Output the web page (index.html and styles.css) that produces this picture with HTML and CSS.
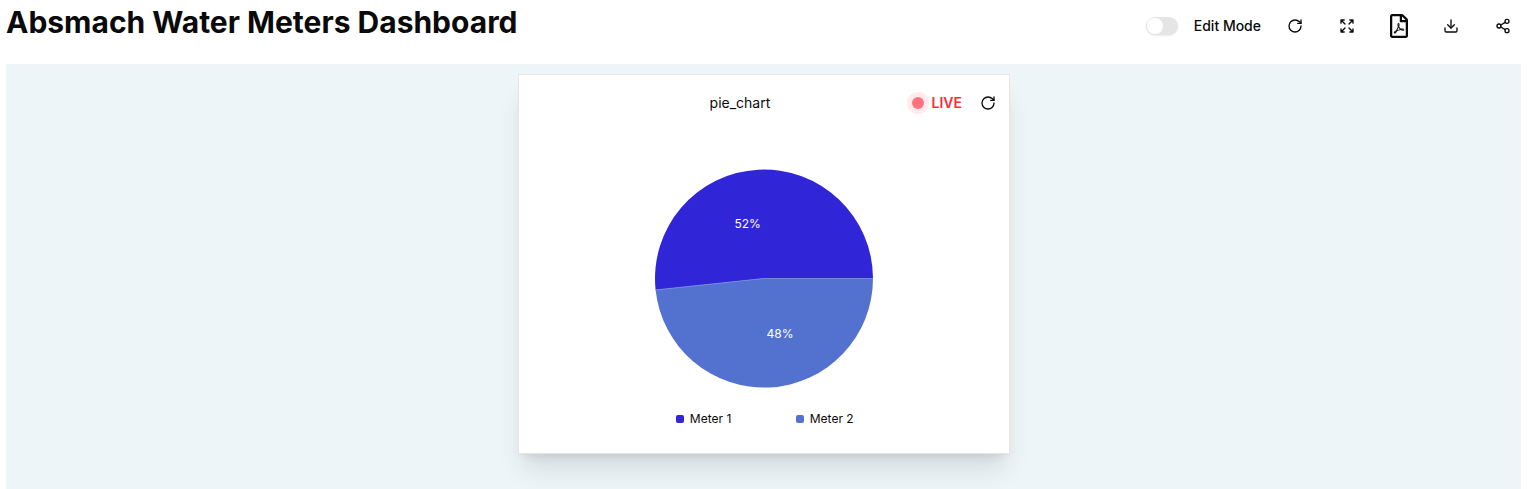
FILE: index.html
```html
<!DOCTYPE html>
<html lang="en">
<head>
<meta charset="utf-8">
<title>Absmach Water Meters Dashboard</title>
<link rel="stylesheet" href="styles.css">
</head>
<body>
<header class="header">
  <h1 class="title">Absmach Water Meters Dashboard</h1>
  <div class="toolbar">
    <button class="switch" role="switch" aria-checked="false" aria-label="Edit Mode"><span class="thumb"></span></button>
    <span class="switch-label">Edit Mode</span>
    <div class="actions">
      <button class="action" aria-label="Refresh"><svg class="icon" viewBox="0 0 24 24"><path d="M21 12a9 9 0 1 1-9-9c2.520 0 4.930 1 6.740 2.740L21 8"/><path d="M21 3v5h-5"/></svg></button>
      <button class="action" aria-label="Full screen"><svg class="icon" viewBox="0 0 24 24"><path d="m21 21-6-6m6 6v-4.800m0 4.800h-4.800"/><path d="M3 16.200V21m0 0h4.800M3 21l6-6"/><path d="M21 7.800V3m0 0h-4.800M21 3l-6 6"/><path d="M3 7.800V3m0 0h4.800M3 3l6 6"/></svg></button>
      <button class="action" aria-label="PDF"><svg class="pdf" viewBox="0 0 384 512"><path d="M369.900 97.900L286 14C277 5 264.800-.1 252.100-.1H48C21.500 0 0 21.500 0 48v416c0 26.500 21.500 48 48 48h288c26.500 0 48-21.500 48-48V131.900c0-12.700-5.100-25-14.100-34zM332.100 128H256V51.900l76.100 76.100zM48 464V48h160v104c0 13.300 10.700 24 24 24h104v288H48zm250.200-143.700c-12.200-12-47-8.700-64.400-6.500-17.200-10.500-28.700-25-36.800-46.300 3.900-16.100 10.100-40.600 5.400-56-4.200-26.200-37.800-23.600-42.600-5.900-4.400 16.100-.4 38.500 7 67.100-10 23.900-24.900 56-35.400 74.400-20 10.300-47 26.200-51 46.200-3.300 15.800 26 55.200 76.100-31.200 22.400-7.400 46.800-16.500 68.400-20.100 18.900 10.200 41 17 55.800 17 25.500 0 28-28.200 17.500-38.700zm-198.100 77.800c5.100-13.700 24.500-29.500 30.400-35-19 30.300-30.400 35.700-30.400 35zm81.600-190.600c7.400 0 6.700 32.100 1.800 40.800-4.400-13.900-4.300-40.800-1.800-40.800zm-24.400 136.600c9.700-16.900 18-37 24.700-54.700 8.300 15.100 18.900 27.200 30.100 35.500-20.800 4.300-38.900 13.100-54.800 19.200zm131.600-5s-5 6-37.300-7.800c35.100-2.600 40.900 5.400 37.300 7.800z"/></svg></button>
      <button class="action" aria-label="Download"><svg class="icon" viewBox="0 0 24 24"><path d="M21 15v4a2 2 0 0 1-2 2H5a2 2 0 0 1-2-2v-4"/><path d="m7 10 5 5 5-5"/><path d="M12 15V3"/></svg></button>
      <button class="action" aria-label="Share"><svg class="icon" viewBox="0 0 24 24"><circle cx="18" cy="5" r="3"/><circle cx="6" cy="12" r="3"/><circle cx="18" cy="19" r="3"/><path d="m8.590 13.510 6.830 3.980M15.410 6.510l-6.820 3.980"/></svg></button>
    </div>
  </div>
</header>
<main class="canvas">
  <section class="card">
    <div class="card-header">
      <h2 class="card-title">pie_chart</h2>
      <div class="live"><span class="pulse"><span class="dot"></span></span><span class="live-text">LIVE</span></div>
      <button class="reload" aria-label="Reload chart"><svg class="icon" viewBox="0 0 24 24"><path d="M21 12a9 9 0 1 1-9-9c2.520 0 4.930 1 6.740 2.740L21 8"/><path d="M21 3v5h-5"/></svg></button>
    </div>
    <svg class="pie" viewBox="0 0 220 220">
      <path class="meter-1" d="M110 109.500H219A109 109 0 1 0 1.600 121Z"/>
      <path class="meter-2" d="M110 109.500H219A109 109 0 0 1 1.600 121Z"/>
      <path class="seam" d="M219 109.500H110L1.600 121"/>
      <text class="slice-label" x="93.700" y="59">52%</text>
      <text class="slice-label" x="126" y="169">48%</text>
    </svg>
    <div class="legend">
      <div class="legend-item"><span class="swatch swatch-1"></span>Meter 1</div>
      <div class="legend-item"><span class="swatch swatch-2"></span>Meter 2</div>
    </div>
  </section>
</main>
</body>
</html>
```
FILE: styles.css
```css
* { box-sizing: border-box; }
body { margin: 0; height: 489px; overflow: hidden; background: #fff; color: #0a0a0a; font-family: Inter, "Liberation Sans", sans-serif; padding: 0 12px 0 6px; }
button { border: 0; padding: 0; background: none; color: inherit; font: inherit; }
.header { height: 64px; display: flex; justify-content: space-between; }
.title { margin: 4px 0 0; font-size: 30px; line-height: 36px; font-weight: 700; letter-spacing: 0; white-space: nowrap; }
.toolbar { display: flex; align-items: center; height: 52px; }
.switch { display: flex; align-items: center; width: 32px; height: 18px; padding: 1px; border-radius: 9px; background: #e5e5e5; box-shadow: 0 1px 2px rgb(0 0 0 / .08); }
.thumb { width: 16px; height: 16px; border-radius: 50%; background: #fff; }
.switch-label { margin-left: 16px; font-size: 14px; line-height: 20px; font-weight: 500; }
.actions { display: flex; gap: 12px; margin-left: 14px; margin-right: -2px; }
.action { display: flex; align-items: center; justify-content: center; width: 40px; height: 40px; }
.icon { width: 16px; height: 16px; fill: none; stroke: currentColor; stroke-width: 2; stroke-linecap: round; stroke-linejoin: round; }
.pdf { width: 18px; height: 24px; fill: currentColor; }
.canvas { height: 425px; padding-top: 10px; background: #edf5f8; overflow: hidden; }
.card { display: flex; flex-direction: column; align-items: center; width: 492px; height: 380px; margin-left: 512px; border: 1px solid #e5e5e5; background: #fff; box-shadow: 0 20px 25px -5px rgb(0 0 0 / .1), 0 8px 10px -6px rgb(0 0 0 / .1); }
.card-header { display: flex; align-items: center; width: 100%; height: 56px; padding-right: 13px; }
.card-title { flex: 1; margin: 0; padding-left: 54px; text-align: center; font-size: 14px; line-height: 20px; font-weight: 400; }
.live { display: flex; align-items: center; gap: 2.7px; }
.pulse { display: grid; place-items: center; width: 22px; height: 22px; border-radius: 50%; background: #ffebee; }
.dot { width: 12px; height: 12px; border-radius: 50%; background: #ff747c; }
.live-text { color: #fb2c36; font-size: 14px; line-height: 20px; font-weight: 600; }
.reload { display: flex; margin-left: 18px; }
.pie { width: 220px; height: 220px; margin-top: 38px; overflow: visible; }
.meter-1 { fill: #3026d8; }
.meter-2 { fill: #5372cf; }
.seam { fill: none; stroke: #7886db; stroke-width: 1; }
.slice-label { fill: #fff; font-size: 12px; text-anchor: middle; }
.legend { display: flex; gap: 64px; margin-top: 22px; padding-left: 2px; }
.legend-item { display: flex; align-items: center; gap: 5.5px; font-size: 12px; line-height: 16px; }
.legend-item + .legend-item { margin-left: 1px; }
.swatch { width: 8px; height: 8px; border-radius: 2px; }
.swatch-1 { background: #3026d8; }
.swatch-2 { background: #5372cf; }
```
